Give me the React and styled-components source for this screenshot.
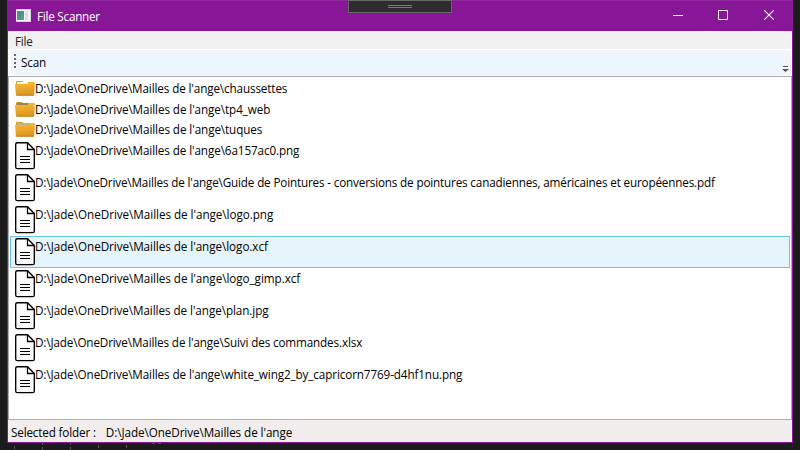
import React from 'react';
import styled, { createGlobalStyle } from 'styled-components';

const GlobalStyle = createGlobalStyle`
  * { box-sizing: border-box; }
  body { margin: 0; }
`;

const Desktop = styled.div`
  position: relative;
  width: 800px;
  height: 450px;
  padding: 0 7px 7px;
  overflow: hidden;
  background: #1b1b1c;
  font: 11.7px/16px "Open Sans", "Noto Sans", sans-serif;
  color: #000;
`;

const Window = styled.div`
  display: flex;
  flex-direction: column;
  height: 443px;
  border: 1px solid #881798;
  border-top-color: #92289f;
  background: #fff;
`;

const Label = styled.span`
  white-space: pre;
  letter-spacing: ${(p) => p.$tracking}px;
`;

const TitleBar = styled.header`
  display: flex;
  align-items: center;
  flex: 0 0 30px;
  padding-left: 8px;
  gap: 6px;
  background: #881798;
  color: #fff;
  > svg { margin-bottom: 2px; }
`;

const Controls = styled.div`
  display: flex;
  margin-left: auto;
  svg { display: block; }
`;

const MenuBar = styled.nav`
  flex: 0 0 18px;
  padding: 2px 7px 0;
  background: #f0f0f0;
  color: #212121;
`;

const ToolTray = styled.div`
  flex: 0 0 27px;
  padding: 1px 1px 1px 3px;
`;

const ToolBar = styled.div`
  display: flex;
  height: 25px;
  padding: 4px 2px 0 3px;
  border-radius: 3px;
  background: #eef5fd;
`;

const Grip = styled.svg`
  margin-right: 5px;
`;

const Overflow = styled.svg`
  margin: 12px 0 0 auto;
`;

const FileList = styled.main`
  flex: 0 0 344px;
  padding: 1px;
  border: 1px solid #abadb3;
`;

const Row = styled.div`
  display: flex;
  height: ${(p) => (p.$folder ? 20.67 : 32)}px;
  padding: 1px 4px;
  border: 1px solid ${(p) => (p.$selected ? '#70c0e7' : 'transparent')};
  background: ${(p) => (p.$selected ? '#e5f3fb' : 'transparent')};
  svg { flex: none; display: block; }
`;

const StatusBar = styled.footer`
  display: flex;
  flex: 1;
  padding: 4px 3px 0;
  gap: 10px;
  background: #f1edec;
`;

const DebugHandle = styled.div`
  position: absolute;
  left: 348px;
  top: 0;
  width: 104px;
  height: 13px;
  padding: 4px 39px 0;
  border: 1px solid #686868;
  background: #2d2d30;
`;

const HandleGrip = styled.div`
  height: 3px;
  border: solid #777;
  border-width: 1px 0;
`;

const Behind = styled.svg`
  position: absolute;
  left: 0;
  top: 443px;
`;

const AppIcon = () => (
  <svg width="15" height="13" viewBox="0 0 15 13" shapeRendering="crispEdges">
    <defs>
      <linearGradient id="appPane" x1="0" y1="0" x2="1" y2="1">
        <stop offset="0" stopColor="#437fa9" />
        <stop offset="1" stopColor="#5ba66d" />
      </linearGradient>
    </defs>
    <path d="M0 0h15v13H0z" fill="#cfd2d2" />
    <path d="M0 1h14v11H0z" fill="#f5f5f5" />
    <path d="M1 2h7v9H1z" fill="url(#appPane)" />
    <path d="M9 2h3v9H9z" fill="#dcdfdf" />
  </svg>
);

const FolderIcon = ({ tab }) => (
  <svg width="20" height="16" viewBox="0 0 20 16">
    <defs>
      <linearGradient id="folderFace" x1="0" y1="0" x2="0.15" y2="1">
        <stop offset="0" stopColor="#fdbd35" />
        <stop offset="1" stopColor="#dc961e" />
      </linearGradient>
    </defs>
    <path d="M1 2Q1 1 2 1h5l1.5 1H18.5v11H1z" fill="#d99a20" />
    <path d="M2 2h11v2H2z" fill={tab} />
    <path d="M0 4h12.5l2-2H20l-.8 13.5H1z" fill="url(#folderFace)" />
    <path d="M1.5 15.3h17.5" stroke="#b77a19" strokeWidth=".8" />
  </svg>
);

const FileIcon = () => (
  <svg width="20" height="28" viewBox="0 0 20 28" fill="none" stroke="#000">
    <path d="M2.2 .7H12.5L19.3 7.5V25Q19.3 26.6 17.8 26.6H2.2Q.7 26.6 .7 25V2.2Q.7 .7 2.2 .7z" fill="#fff" strokeWidth="1.35" />
    <path d="M12.5 .7v6.8H19.3" strokeWidth="1.3" />
    <path d="M5 14.5h10M5 17.5h10M5 20.5h10" strokeWidth="1.1" />
  </svg>
);

const BASE = "D:\\Jade\\OneDrive\\Mailles de l'ange";

const entries = [
  { name: 'chaussettes', tab: '#fff6dc', tracking: -0.123 },
  { name: 'tp4_web', tab: '#8c8878', tracking: -0.095 },
  { name: 'tuques', tab: '#b9b4a5', tracking: -0.094 },
  { name: '6a157ac0.png', tracking: -0.1 },
  {
    name: 'Guide de Pointures - conversions de pointures canadiennes, américaines et européennes.pdf',
    tracking: -0.16,
  },
  { name: 'logo.png', tracking: -0.05 },
  { name: 'logo.xcf', tracking: -0.06, selected: true },
  { name: 'logo_gimp.xcf', tracking: -0.055 },
  { name: 'plan.jpg', tracking: -0.07 },
  { name: 'Suivi des commandes.xlsx', tracking: -0.134 },
  { name: 'white_wing2_by_capricorn7769-d4hf1nu.png', tracking: -0.11 },
];

export default function App() {
  return (
    <Desktop>
      <GlobalStyle />
      <Window>
        <TitleBar>
          <AppIcon />
          <Label $tracking={-0.235}>File Scanner</Label>
          <Controls>
            <svg width="138" height="30" viewBox="0 0 138 30" fill="none" stroke="#fff">
              <path d="M19 14.5h10" />
              <path d="M64.5 9.5h9v9h-9z" />
              <path d="M110.3 9.3l9.4 9.4M119.7 9.3l-9.4 9.4" strokeWidth="1.1" />
            </svg>
          </Controls>
        </TitleBar>
        <MenuBar>
          <Label $tracking={-0.256}>File</Label>
        </MenuBar>
        <ToolTray>
          <ToolBar>
            <Grip width="2" height="14" viewBox="0 0 2 14" shapeRendering="crispEdges">
              <path d="M0 0h2v2H0zM0 4h2v2H0zM0 8h2v2H0zM0 12h2v2H0z" fill="#606870" />
            </Grip>
            <Label $tracking={-0.185}>Scan</Label>
            <Overflow width="7" height="6" viewBox="0 0 7 6">
              <path d="M1 0h5v1H1zM0 3h7L3.5 6z" fill="#555" />
            </Overflow>
          </ToolBar>
        </ToolTray>
        <FileList>
          {entries.map((e) => (
            <Row key={e.name} $folder={!!e.tab} $selected={e.selected}>
              {e.tab ? <FolderIcon tab={e.tab} /> : <FileIcon />}
              <Label $tracking={e.tracking}>{`${BASE}\\${e.name}`}</Label>
            </Row>
          ))}
        </FileList>
        <StatusBar>
          <Label $tracking={-0.156}>Selected folder :</Label>
          <Label $tracking={-0.08}>{BASE}</Label>
        </StatusBar>
      </Window>
      <DebugHandle>
        <HandleGrip />
      </DebugHandle>
      <Behind width="200" height="7" viewBox="0 0 200 7" stroke="#555" shapeRendering="crispEdges">
        <path d="M14.5 3v3M42.5 0v2M42.5 4v3M70.5 0v2M70.5 4v3M98.5 2v3M126.5 2v3M152 .5h3M158 .5h3" />
      </Behind>
    </Desktop>
  );
}
